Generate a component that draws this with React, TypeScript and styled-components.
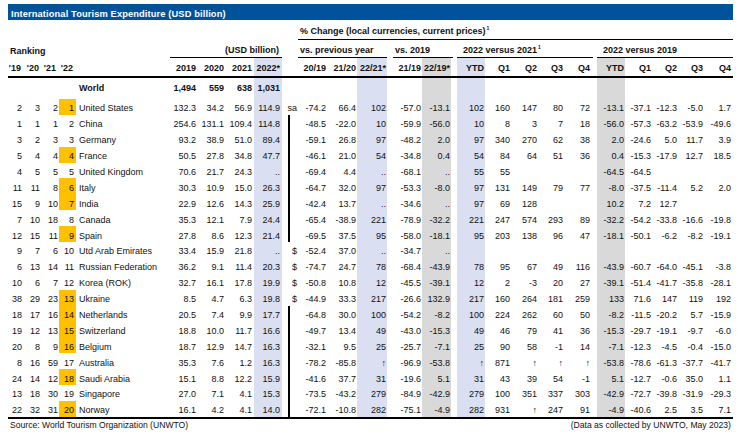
import React from 'react';
import styled, { createGlobalStyle, css } from 'styled-components';

const GlobalStyle = createGlobalStyle`
  *, *::before, *::after { box-sizing: border-box; }
  html, body { margin: 0; padding: 0; background: #fff; }
  body {
    font-family: "Liberation Sans", Arial, sans-serif;
    color: #111;
    font-size: 9px;
  }
`;

// column widths, px (left edge of the table sits at x=8)
const COLS = [16, 18, 17, 17, 94, 28, 28, 28, 28, 16, 30, 29, 30, 35, 29, 6, 28, 26, 27, 26, 27, 6, 28, 27, 26, 26, 29];
const PAD_R = [2, 2, 1, 2, 0, 2, 2, 2, 2, 1, 2, 1, 1, 1, 1, 0, 1, 1, 1, 1, 1, 0, 1, 1, 1, 1, 2];
const BANDS: Record<number, Band> = { 8: 'blue', 12: 'blue', 14: 'gray', 16: 'blue', 22: 'gray' };

type Band = 'blue' | 'gray';

const Page = styled.div`
  padding: 4px 0 0 8px;
  width: 741px;
`;

const TitleBar = styled.div`
  width: 725px;
  height: 16px;
  background: #00529b;
  color: #fff;
  font-weight: 700;
  font-size: 9.3px;
  letter-spacing: 0.12px;
  display: flex;
  align-items: flex-end;
  padding: 0 0 1px 3px;
`;

const Table = styled.div`
  width: 725px;
  border-bottom: 2px solid #000;
`;

const GridRow = styled.div<{ $h: number; $pb: number; $rule?: boolean }>`
  display: grid;
  grid-template-columns: ${COLS.map(w => `${w}px`).join(' ')};
  height: ${p => p.$h + (p.$rule ? 2 : 0)}px;
  ${p => p.$rule && css`border-bottom: 2px solid #000;`}

  & > div {
    padding-bottom: ${p => p.$pb}px;
  }
`;

const Cell = styled.div<{
  $right?: boolean;
  $pr?: number;
  $pl?: number;
  $band?: Band;
  $hl?: boolean;
  $bold?: boolean;
  $span?: string;
  $bar?: boolean;
  $line?: boolean;
}>`
  display: flex;
  align-items: flex-end;
  justify-content: ${p => (p.$right ? 'flex-end' : 'flex-start')};
  padding-right: ${p => p.$pr ?? 0}px;
  padding-left: ${p => p.$pl ?? 0}px;
  white-space: nowrap;
  font-weight: ${p => (p.$bold ? 700 : 400)};
  background: ${p =>
    p.$hl ? '#ffc000' : p.$band === 'blue' ? '#dae0f1' : p.$band === 'gray' ? '#d9d9d9' : 'transparent'};
  ${p => p.$span && css`grid-column: ${p.$span};`}
  ${p =>
    p.$bar &&
    css`
      margin-left: 6px;
      border-left: 2px solid #000;
    `}
  ${p => p.$line && css`border-bottom: 1px solid #000;`}
`;

const Sup = styled.sup`
  font-size: 5px;
  vertical-align: 4px;
  line-height: 0;
  margin-left: 1px;
`;

const Footer = styled.div`
  width: 725px;
  display: flex;
  justify-content: space-between;
  font-size: 8.6px;
  padding: 1px 2px 0;
`;

interface Row {
  rank: string[];
  name: string;
  usd: string[];
  flag?: string;
  bar?: boolean;
  pct: string[];
  ytd21: string[];
  ytd19: string[];
  hl?: boolean;
}

const ROWS: Row[] = [
  { rank: ['2', '3', '2', '1'], name: 'United States', usd: ['132.3', '34.2', '56.9', '114.9'], flag: 'sa', pct: ['-74.2', '66.4', '102', '-57.0', '-13.1'], ytd21: ['102', '160', '147', '80', '72'], ytd19: ['-13.1', '-37.1', '-12.3', '-5.0', '1.7'], hl: true },
  { rank: ['1', '1', '1', '2'], name: 'China', usd: ['254.6', '131.1', '109.4', '114.8'], bar: true, pct: ['-48.5', '-22.0', '10', '-59.9', '-56.0'], ytd21: ['10', '8', '3', '7', '18'], ytd19: ['-56.0', '-57.3', '-63.2', '-53.9', '-49.6'] },
  { rank: ['3', '2', '3', '3'], name: 'Germany', usd: ['93.2', '38.9', '51.0', '89.4'], bar: true, pct: ['-59.1', '26.8', '97', '-48.2', '2.0'], ytd21: ['97', '340', '270', '62', '38'], ytd19: ['2.0', '-24.6', '5.0', '11.7', '3.9'] },
  { rank: ['5', '4', '4', '4'], name: 'France', usd: ['50.5', '27.8', '34.8', '47.7'], bar: true, pct: ['-46.1', '21.0', '54', '-34.8', '0.4'], ytd21: ['54', '84', '64', '51', '36'], ytd19: ['0.4', '-15.3', '-17.9', '12.7', '18.5'], hl: true },
  { rank: ['4', '5', '5', '5'], name: 'United Kingdom', usd: ['70.6', '21.7', '24.3', '..'], bar: true, pct: ['-69.4', '4.4', '..', '-68.1', '..'], ytd21: ['55', '55', '', '', ''], ytd19: ['-64.5', '-64.5', '', '', ''] },
  { rank: ['11', '11', '8', '6'], name: 'Italy', usd: ['30.3', '10.9', '15.0', '26.3'], bar: true, pct: ['-64.7', '32.0', '97', '-53.3', '-8.0'], ytd21: ['97', '131', '149', '79', '77'], ytd19: ['-8.0', '-37.5', '-11.4', '5.2', '2.0'], hl: true },
  { rank: ['15', '9', '10', '7'], name: 'India', usd: ['22.9', '12.6', '14.3', '25.9'], bar: true, pct: ['-42.4', '13.7', '..', '-34.6', '..'], ytd21: ['97', '69', '128', '', ''], ytd19: ['10.2', '7.2', '12.7', '', ''], hl: true },
  { rank: ['7', '10', '18', '8'], name: 'Canada', usd: ['35.3', '12.1', '7.9', '24.4'], bar: true, pct: ['-65.4', '-38.9', '221', '-78.9', '-32.2'], ytd21: ['221', '247', '574', '293', '89'], ytd19: ['-32.2', '-54.2', '-33.8', '-16.6', '-19.8'] },
  { rank: ['12', '15', '11', '9'], name: 'Spain', usd: ['27.8', '8.6', '12.3', '21.4'], bar: true, pct: ['-69.5', '37.5', '95', '-58.0', '-18.1'], ytd21: ['95', '203', '138', '96', '47'], ytd19: ['-18.1', '-50.1', '-6.2', '-8.2', '-19.1'], hl: true },
  { rank: ['9', '7', '6', '10'], name: 'Utd Arab Emirates', usd: ['33.4', '15.9', '21.8', '..'], flag: '$', pct: ['-52.4', '37.0', '..', '-34.7', '..'], ytd21: ['', '', '', '', ''], ytd19: ['', '', '', '', ''] },
  { rank: ['6', '13', '14', '11'], name: 'Russian Federation', usd: ['36.2', '9.1', '11.4', '20.3'], flag: '$', pct: ['-74.7', '24.7', '78', '-68.4', '-43.9'], ytd21: ['78', '95', '67', '49', '116'], ytd19: ['-43.9', '-60.7', '-64.0', '-45.1', '-3.8'] },
  { rank: ['10', '6', '7', '12'], name: 'Korea (ROK)', usd: ['32.7', '16.1', '17.8', '19.9'], flag: '$', pct: ['-50.8', '10.8', '12', '-45.5', '-39.1'], ytd21: ['12', '2', '-3', '20', '27'], ytd19: ['-39.1', '-51.4', '-41.7', '-35.8', '-28.1'] },
  { rank: ['38', '29', '23', '13'], name: 'Ukraine', usd: ['8.5', '4.7', '6.3', '19.8'], flag: '$', pct: ['-44.9', '33.3', '217', '-26.6', '132.9'], ytd21: ['217', '160', '264', '181', '259'], ytd19: ['133', '71.6', '147', '119', '192'], hl: true },
  { rank: ['18', '17', '16', '14'], name: 'Netherlands', usd: ['20.5', '7.4', '9.9', '17.7'], bar: true, pct: ['-64.8', '30.0', '100', '-54.2', '-8.2'], ytd21: ['100', '224', '262', '60', '50'], ytd19: ['-8.2', '-11.5', '-20.2', '5.7', '-15.9'], hl: true },
  { rank: ['19', '12', '13', '15'], name: 'Switzerland', usd: ['18.8', '10.0', '11.7', '16.6'], bar: true, pct: ['-49.7', '13.4', '49', '-43.0', '-15.3'], ytd21: ['49', '46', '79', '41', '36'], ytd19: ['-15.3', '-29.7', '-19.1', '-9.7', '-6.0'], hl: true },
  { rank: ['20', '8', '9', '16'], name: 'Belgium', usd: ['18.7', '12.9', '14.7', '16.3'], bar: true, pct: ['-32.1', '9.5', '25', '-25.7', '-7.1'], ytd21: ['25', '90', '58', '-1', '14'], ytd19: ['-7.1', '-12.3', '-4.5', '-0.4', '-15.0'], hl: true },
  { rank: ['8', '16', '59', '17'], name: 'Australia', usd: ['35.3', '7.6', '1.2', '16.3'], bar: true, pct: ['-78.2', '-85.8', '↑', '-96.9', '-53.8'], ytd21: ['↑', '871', '↑', '↑', '↑'], ytd19: ['-53.8', '-78.6', '-61.3', '-37.7', '-41.7'] },
  { rank: ['24', '14', '12', '18'], name: 'Saudi Arabia', usd: ['15.1', '8.8', '12.2', '15.9'], bar: true, pct: ['-41.6', '37.7', '31', '-19.6', '5.1'], ytd21: ['31', '43', '39', '54', '-1'], ytd19: ['5.1', '-12.7', '-0.6', '35.0', '1.1'], hl: true },
  { rank: ['13', '18', '30', '19'], name: 'Singapore', usd: ['27.0', '7.1', '4.1', '15.3'], bar: true, pct: ['-73.5', '-43.2', '279', '-84.9', '-42.9'], ytd21: ['279', '100', '351', '337', '303'], ytd19: ['-42.9', '-72.7', '-39.8', '-31.9', '-29.3'] },
  { rank: ['22', '32', '31', '20'], name: 'Norway', usd: ['16.1', '4.2', '4.1', '14.0'], bar: true, pct: ['-72.1', '-10.8', '282', '-75.1', '-4.9'], ytd21: ['282', '931', '↑', '247', '91'], ytd19: ['-4.9', '-40.6', '2.5', '3.5', '7.1'], hl: true },
];

// turns one row into the 27 grid cells (spacer columns at 15 and 21)
const toCells = (r: Row) => [
  ...r.rank,
  r.name,
  ...r.usd,
  r.flag ?? '',
  ...r.pct,
  '',
  ...r.ytd21,
  '',
  ...r.ytd19,
];

const HEAD_C = ["'19", "'20", "'21", "'22", '', '2019', '2020', '2021', '2022*', '', '20/19', '21/20', '22/21*', '21/19', '22/19*', '', 'YTD', 'Q1', 'Q2', 'Q3', 'Q4', '', 'YTD', 'Q1', 'Q2', 'Q3', 'Q4'];
const WORLD = ['', '', '', '', 'World', '1,494', '559', '638', '1,031'];

export default function App() {
  return (
    <>
      <GlobalStyle />
      <Page>
        <TitleBar>International Tourism Expenditure (USD billion)</TitleBar>
        <Table>
          <GridRow $h={20} $pb={3}>
            <Cell $bold $span="11 / 28" $pl={2} $line>
              <span>
                % Change (local currencies, current prices)<Sup>1</Sup>
              </span>
            </Cell>
          </GridRow>

          <GridRow $h={18} $pb={2.5}>
            <Cell $bold $span="1 / 6" $pl={2}>
              Ranking
            </Cell>
            <Cell $bold $span="6 / 10" $right $pr={3} $line>
              (USD billion)
            </Cell>
            <Cell $bold $span="11 / 14" $pl={2} $line>
              vs. previous year
            </Cell>
            <Cell $bold $span="14 / 17" $pl={2} $line style={{ marginLeft: 6, marginRight: 4 }}>
              vs. 2019
            </Cell>
            <Cell $bold $span="17 / 23" $pl={6} $line style={{ marginRight: 4 }}>
              <span>
                2022 versus 2021<Sup>1</Sup>
              </span>
            </Cell>
            <Cell $bold $span="23 / 28" $pl={6} $line>
              2022 versus 2019
            </Cell>
          </GridRow>

          <GridRow $h={18} $pb={3} $rule>
            {HEAD_C.map((t, i) => (
              <Cell key={i} $bold $right $pr={i < 4 ? 3 : PAD_R[i]} $band={BANDS[i]}>
                {t}
              </Cell>
            ))}
          </GridRow>

          <GridRow $h={21} $pb={6}>
            {COLS.map((_, i) => (
              <Cell
                key={i}
                $bold
                $right={i !== 4}
                $pl={i === 4 ? 3 : 0}
                $pr={PAD_R[i]}
                $band={BANDS[i]}
              >
                {WORLD[i] ?? ''}
              </Cell>
            ))}
          </GridRow>

          {ROWS.map(r => (
            <GridRow key={r.name} $h={15.9} $pb={1.5}>
              {toCells(r).map((t, i) => (
                <Cell
                  key={i}
                  $right={i !== 4}
                  $pl={i === 4 ? 3 : 0}
                  $pr={PAD_R[i]}
                  $band={BANDS[i]}
                  $hl={i === 3 && r.hl}
                  $bar={i === 9 && r.bar}
                >
                  {t}
                </Cell>
              ))}
            </GridRow>
          ))}
        </Table>
        <Footer>
          <span>Source: World Tourism Organization (UNWTO)</span>
          <span>(Data as collected by UNWTO, May 2023)</span>
        </Footer>
      </Page>
    </>
  );
}
